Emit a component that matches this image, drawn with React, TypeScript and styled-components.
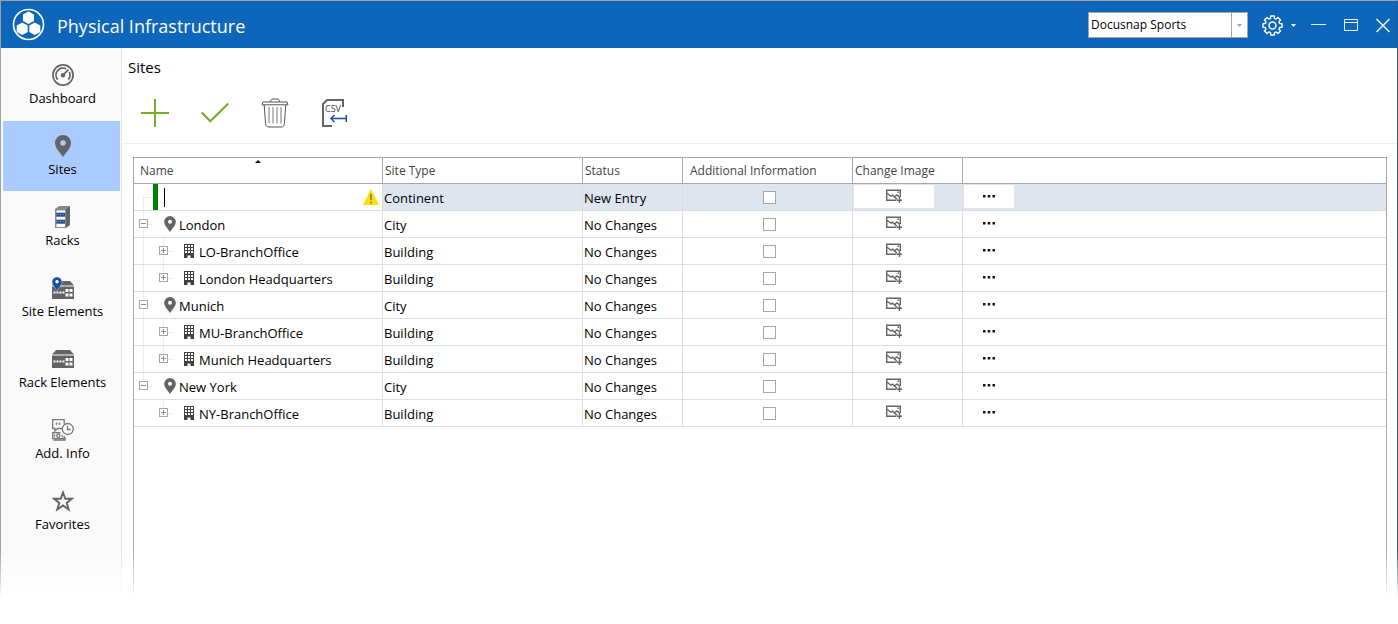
import React from "react";
import styled, { createGlobalStyle, css } from "styled-components";

const color = {
  brand: "#0e66ba",
  line: "#a6a6a6",
  rowLine: "#dedede",
  treeLine: "#ededed",
  selectedNav: "#a9cbff",
  selectedRow: "#dfe5ef",
  icon: "#646464",
  green: "#75af29",
  blue: "#1650a0",
};

const GlobalStyle = createGlobalStyle`
  *, *::before, *::after { box-sizing: border-box; }
  body {
    margin: 0;
    background: #fff;
    color: #000;
    font: 13px/20px "Open Sans", "Noto Sans", sans-serif;
  }
  button, input, select { font: inherit; color: inherit; }
  svg { display: block; }
`;

const Shell = styled.div`
  position: relative;
  display: flex;
  flex-direction: column;
  min-height: 100vh;
  border: 1px solid #a0a0a0;
  border-right-color: #2c5a90;
  border-bottom: 0;
`;

const TitleBar = styled.header`
  display: flex;
  align-items: center;
  height: 47px;
  padding: 0 6px 0 11px;
  background: ${color.brand};
  color: #fff;
`;

const AppTitle = styled.h1`
  flex: 1;
  margin: 0 0 0 12px;
  padding-top: 3px;
  font-size: 18px;
  line-height: 24px;
  font-weight: 400;
`;

const ComboBox = styled.div`
  display: grid;
  grid-template-columns: 1fr 16px;
  width: 160px;
  height: 26px;
  margin-top: 1px;
  border: 1px solid ${color.line};
  background: #fff;
`;

const ComboSelect = styled.select`
  grid-area: 1 / 1 / 2 / 3;
  appearance: none;
  width: 100%;
  padding: 0 16px 1px 2px;
  border: 0;
  border-radius: 0;
  background: transparent;
  color: #000;
  font-size: 12px;
  outline: 0;
`;

const ComboArrow = styled.span`
  grid-area: 1 / 2 / 2 / 3;
  display: grid;
  place-items: center;
  border-left: 1px solid ${color.line};
  pointer-events: none;
`;

const PlainButton = styled.button`
  display: flex;
  align-items: center;
  justify-content: center;
  padding: 0;
  border: 0;
  background: transparent;
`;

const SettingsButton = styled(PlainButton)`
  gap: 8px;
  margin: 1px 0 0 14px;
`;

const WindowButtons = styled.div`
  display: flex;
  gap: 16px;
  margin-left: 15px;
`;

const WindowButton = styled(PlainButton)`
  width: 16px;
  height: 24px;
`;

const Body = styled.div`
  flex: 1;
  display: flex;
`;

const Sidebar = styled.nav`
  display: flex;
  flex-direction: column;
  flex: none;
  gap: 1px;
  width: 121px;
  padding: 2px 1px 0 2px;
  border-right: 1px solid #e6e6e6;
  background: #fafafa;
`;

const NavItem = styled.a<{ $active?: boolean }>`
  display: flex;
  flex-direction: column;
  align-items: center;
  gap: 2px;
  height: 70px;
  padding: 14px 0 0 2px;
  background: ${(p) => (p.$active ? color.selectedNav : "transparent")};
  color: inherit;
  text-decoration: none;
  white-space: nowrap;
`;

const Content = styled.main`
  flex: 1;
  display: flex;
  flex-direction: column;
  min-width: 0;
`;

const PageTitle = styled.h2`
  margin: 0;
  padding: 7px 6px 0;
  font-size: 15px;
  line-height: 24px;
  font-weight: 400;
`;

const Toolbar = styled.div`
  display: flex;
  padding: 4px 3px 0;
  border-bottom: 1px solid #f0f0f0;
`;

const ToolButton = styled(PlainButton)`
  width: 60px;
  height: 60px;
`;

const GridPanel = styled.section`
  flex: 1;
  margin: 13px 10px 0 11px;
  border: 1px solid ${color.line};
  border-bottom: 0;
`;

const Table = styled.table`
  width: 100%;
  border-collapse: separate;
  border-spacing: 0;
  table-layout: fixed;
`;

const Col = styled.col<{ $width?: number }>`
  ${(p) => p.$width && css`width: ${p.$width}px;`}
`;

const HeadCell = styled.th<{ $pad?: number }>`
  position: relative;
  height: 26px;
  padding: 0 0 0 ${(p) => p.$pad ?? 2}px;
  border-right: 1px solid ${color.line};
  border-bottom: 1px solid ${color.line};
  color: #444;
  font-size: 12px;
  line-height: 20px;
  font-weight: 400;
  text-align: left;
  white-space: nowrap;
  &:last-child { border-right: 0; }
`;

const SortMark = styled.svg`
  position: absolute;
  top: 2px;
  left: 50%;
  transform: translateX(-50%);
`;

const Row = styled.tr<{ $editing?: boolean }>`
  background: ${(p) => (p.$editing ? color.selectedRow : "transparent")};
`;

const Cell = styled.td<{ $pad?: number }>`
  height: 27px;
  padding: 0 0 0 ${(p) => p.$pad ?? 1}px;
  border-right: 1px solid ${color.rowLine};
  border-bottom: 1px solid ${color.rowLine};
  white-space: nowrap;
  &:last-child { border-right: 0; }
`;

const TextLine = styled.span`
  display: block;
  padding-top: 2px;
`;

const NameLine = styled.div<{ $editing?: boolean }>`
  display: flex;
  align-items: center;
  height: 26px;
  background: ${(p) => (p.$editing ? "#fff" : "transparent")};
`;

const NodeIcon = styled.span`
  width: 16px;
  padding-left: 1px;
`;

const NewMark = styled.span`
  width: 5px;
  height: 26px;
  background: #008000;
`;

const Caret = styled.span`
  width: 1px;
  height: 19px;
  margin-left: 6px;
  background: #000;
`;

const NameInput = styled.input`
  flex: 1;
  min-width: 0;
  padding: 0;
  border: 0;
  outline: 0;
  background: transparent;
`;

const WarningMark = styled.span`
  margin-right: 3px;
`;

const CheckLine = styled.div`
  display: flex;
  justify-content: center;
`;

const CheckBox = styled.input`
  appearance: none;
  width: 13px;
  height: 13px;
  margin: 0;
  border: 1px solid ${color.line};
  background: #fff;
`;

const CellButton = styled(PlainButton)<{ $width: number; $editing?: boolean }>`
  width: ${(p) => p.$width}px;
  height: 23px;
  margin-bottom: 2px;
  background: ${(p) => (p.$editing ? "#fff" : "transparent")};
`;

const BottomFade = styled.div`
  position: absolute;
  right: -1px;
  bottom: 0;
  left: -1px;
  height: 74px;
  background: linear-gradient(rgba(255, 255, 255, 0), #fff 48px);
  pointer-events: none;
`;

const Logo = () => (
  <svg width="33" height="33" viewBox="0 0 33 33" aria-hidden="true">
    <circle cx="16.5" cy="16.5" r="15" fill="none" stroke="#fff" strokeWidth="1.6" />
    <g fill="#fff">
      <path d="M16.5 3.4 22 6.5v6.4l-5.5 3.2-5.5-3.2V6.5z" />
      <path d="M10.2 14.4l5.5 3.1v6.4l-5.5 3.2-5.5-3.2v-6.4z" />
      <path d="M22.8 14.4l5.5 3.1v6.4l-5.5 3.2-5.5-3.2v-6.4z" />
    </g>
  </svg>
);

const teeth = 8;
const gearPath = (() => {
  const points: string[] = [];
  const at = (radius: number, angle: number) =>
    `${(10.5 + radius * Math.sin(angle)).toFixed(2)} ${(10.5 - radius * Math.cos(angle)).toFixed(2)}`;
  for (let i = 0; i < teeth; i++) {
    const mid = (i * 2 * Math.PI) / teeth;
    points.push(at(7.4, mid - 0.27), at(9.7, mid - 0.19), at(9.7, mid + 0.19), at(7.4, mid + 0.27));
  }
  return `M${points.join("L")}Z`;
})();

const GearIcon = () => (
  <svg width="21" height="21" viewBox="0 0 21 21" fill="none" stroke="#fff" strokeWidth="1.4" strokeLinejoin="round" aria-hidden="true">
    <path d={gearPath} />
    <circle cx="10.5" cy="10.5" r="3.5" />
  </svg>
);

const DownArrow = ({ fill }: { fill: string }) => (
  <svg width="5" height="3" viewBox="0 0 5 3" aria-hidden="true">
    <path d="M0 0h5L2.5 3z" fill={fill} />
  </svg>
);

const DashboardIcon = () => (
  <svg width="22" height="22" viewBox="0 0 22 22" fill="none" stroke={color.icon} aria-hidden="true">
    <circle cx="11" cy="11" r="10.1" strokeWidth="1.7" />
    <path d="M5.7 15.6A7 7 0 0 1 14.2 4.8M17.3 8A7 7 0 0 1 16.3 15.6" strokeWidth="1.7" />
    <path d="M11 11.2 16.4 5.6" strokeWidth="1.8" />
    <circle cx="11" cy="11.2" r="2.2" fill={color.icon} stroke="none" />
  </svg>
);

const PinIcon = ({ width, height }: { width: number; height: number }) => (
  <svg width={width} height={height} viewBox="0 0 16 22" fill={color.icon} aria-hidden="true">
    <path fillRule="evenodd" d="M8 0a8 8 0 0 1 8 8c0 5-5 9.500-8 14C5 17.500 0 13 0 8a8 8 0 0 1 8-8zm0 5.200a2.700 2.700 0 1 0 0 5.400 2.700 2.700 0 0 0 0-5.400z" />
  </svg>
);

const RackIcon = () => (
  <svg width="22" height="22" viewBox="0 0 22 22" aria-hidden="true">
    <path d="M3 3l4-3h11l-3.500 3z" fill="#8a8a8a" />
    <path d="M14 3l4-3v19l-4 3z" fill={color.icon} />
    <path d="M3 3h11v19H3z" fill="#8a8a8a" />
    <path d="M4.500 4.500h8.500v2H4.500zM4.500 11h8.500v2.500H4.500zM4.500 18h8.500v3H4.500z" fill="#fff" />
    <path d="M4.500 7h8.500v3.200H4.500zM4.500 14h8.500v3.200H4.500z" fill={color.blue} />
    <path d="M5.500 8.600h7M5.500 15.600h7" stroke="#9fb9df" strokeDasharray="1 1.500" />
  </svg>
);

const SwitchShape = () => (
  <>
    <path d="M4 0h14l4 4.500H0z" fill={color.icon} />
    <path d="M0 5.500h22V18H0z" fill={color.icon} />
    <path d="M1.500 11.500h11" stroke="#fff" strokeWidth="2" strokeDasharray="2 1" />
    <path d="M13.500 8h3v3h-3zM17.500 8h3v3h-3zM13.500 12.500h3v3h-3zM17.500 12.500h3v3h-3z" fill="#fff" />
  </>
);

const SiteElementsIcon = () => (
  <svg width="22" height="22" viewBox="0 0 22 22" aria-hidden="true">
    <g transform="translate(0 4)"><SwitchShape /></g>
    <path d="M5 0a5 5 0 0 1 5 5c0 3.200-3 5.500-5 8.500C3 10.500 0 8.200 0 5a5 5 0 0 1 5-5z" fill={color.blue} stroke="#fafafa" strokeWidth=".4" />
    <circle cx="5" cy="4.800" r="1.700" fill="#fff" />
  </svg>
);

const RackElementsIcon = () => (
  <svg width="22" height="22" viewBox="0 0 22 22" aria-hidden="true">
    <g transform="translate(0 2)"><SwitchShape /></g>
  </svg>
);

const InfoIcon = () => (
  <svg width="22" height="22" viewBox="0 0 22 22" fill="none" stroke="#777" strokeWidth="1.300" aria-hidden="true">
    <path d="M10.500 9.500H5.500L3 12V9.500H.700V.700h11.500v4" />
    <path d="M4.500 3.500v2.200M7.500 3.500v2.200" strokeWidth="1.500" />
    <circle cx="15.800" cy="10" r="5.500" />
    <path d="M15.500 6.500v4h3.200" />
    <path d="M8.500 13.700H.700v5.800h11.500V17" />
    <path d="M1.500 21h11.700v-2.500" />
    <circle cx="6.300" cy="16.600" r="1.600" />
    <path d="M2.500 15.200v2.600M10.200 15.800v2" />
  </svg>
);

const StarIcon = () => (
  <svg width="22" height="22" viewBox="0 0 22 22" fill="none" stroke={color.icon} strokeWidth="1.900" aria-hidden="true">
    <path d="M11 2.500l2.300 6.300h6.600l-5.200 4.100 2 6.600-5.700-4-5.700 4 2-6.600-5.200-4.100h6.600z" />
  </svg>
);

const PlusIcon = () => (
  <svg width="28" height="28" viewBox="0 0 28 28" stroke={color.green} strokeWidth="2" aria-hidden="true">
    <path d="M14 0v28M0 14h28" />
  </svg>
);

const CheckIcon = () => (
  <svg width="28" height="28" viewBox="0 0 28 28" fill="none" stroke={color.green} strokeWidth="2.200" aria-hidden="true">
    <path d="M.800 13.500l8.500 8.700L27.300 4.500" />
  </svg>
);

const TrashIcon = () => (
  <svg width="28" height="30" viewBox="0 0 28 30" fill="none" stroke="#555" aria-hidden="true">
    <path d="M9.500 4c0-2 1-3 2.500-3h4c1.500 0 2.500 1 2.500 3" />
    <path d="M2 4h24l1 2.800H1zM3.200 7l1.400 18.500c.2 2.500 1.400 3.500 3.400 3.500h12c2 0 3.200-1 3.400-3.500L24.800 7" />
    <path d="M8 9v16.500M12 9v16.500M16 9v16.500M20 9v16.500" stroke="#bbb" strokeWidth="2" />
  </svg>
);

const CsvText = styled.text`
  font: 9px "Open Sans", sans-serif;
`;

const CsvIcon = () => (
  <svg width="28" height="28" viewBox="0 0 28 28" fill="none" aria-hidden="true">
    <path d="M11 27H2V5l4-4h16v7" stroke={color.icon} strokeWidth="2" />
    <CsvText x="4" y="13" fill="#444">CSV</CsvText>
    <path d="M10 19.500H24.500M13.500 16L10 19.500l3.500 3.500M25.300 16v7" stroke={color.blue} strokeWidth="1.500" />
  </svg>
);

const BuildingIcon = () => (
  <svg width="10" height="14" viewBox="0 0 10 14" aria-hidden="true">
    <path d="M0 0h10v14H6.500v-2.500h-3V14H0z" fill="#404040" />
    <path d="M1 1h2v2H1zM4 1h2v2H4zM7 1h2v2H7zM1 4h2v2H1zM4 4h2v2H4zM7 4h2v2H7zM1 7h2v2H1zM4 7h2v2H4zM7 7h2v2H7z" fill="#fff" />
  </svg>
);

const WarningIcon = () => (
  <svg width="16" height="16" viewBox="0 0 16 16" role="img" aria-label="Name required">
    <path d="M8 0l8 16H0z" fill="#ffdf00" />
    <path d="M8 5v6M8 12.500v2" stroke="#777" strokeWidth="1.600" />
  </svg>
);

const ImageIcon = () => (
  <svg width="16" height="14" viewBox="0 0 16 14" fill="none" stroke={color.icon} strokeWidth="1.400" aria-hidden="true">
    <path d="M10.500 11.300H.700V1.200h13.600V8" />
    <path d="M1 4.200l4 3 1.500-1 4.500 4M9 7.500l2-1.500 3 2.500" />
    <path d="M13.500 8.500V14M11 11.200h5M11.500 3.200h1.500" />
  </svg>
);

const DotsIcon = () => (
  <svg width="12" height="3" viewBox="0 0 12 3" aria-hidden="true">
    <path d="M0 0h2.500v2.500H0zM4.700 0h2.500v2.500H4.700zM9.500 0H12v2.500H9.500z" fill="#111" />
  </svg>
);

type Branch = { level: 0 | 1; up: boolean; down: boolean; trunk?: boolean; open?: boolean };

const TreeLines = ({ level, up, down, trunk, open, isNew }: Branch & { isNew?: boolean }) => {
  const x = 9.5 + level * 20;
  const width = isNew ? 19 : 29 + level * 20;
  return (
    <svg width={width} height="26" viewBox={`0 0 ${width} 26`} fill="none" stroke={color.treeLine} aria-hidden="true">
      {trunk && <path d="M9.500 0v26" />}
      <path d={`M${x} ${up ? 0 : 13}V${down ? 26 : 13}M${x} 13.500h10`} />
      {!isNew && (
        <>
          <rect x={x - 4} y="8.500" width="8" height="8" fill="#fff" stroke="#a6a6a6" />
          <path d={`M${x - 2.5} 12.500h5${open ? "" : `M${x} 10v5`}`} stroke="#8c8c8c" />
        </>
      )}
    </svg>
  );
};

type Site = Branch & { name: string; type: string };

const sites: Site[] = [
  { name: "London", type: "City", level: 0, up: true, down: true, open: true },
  { name: "LO-BranchOffice", type: "Building", level: 1, up: true, down: true, trunk: true },
  { name: "London Headquarters", type: "Building", level: 1, up: true, down: false, trunk: true },
  { name: "Munich", type: "City", level: 0, up: true, down: true, open: true },
  { name: "MU-BranchOffice", type: "Building", level: 1, up: true, down: true, trunk: true },
  { name: "Munich Headquarters", type: "Building", level: 1, up: true, down: false, trunk: true },
  { name: "New York", type: "City", level: 0, up: true, down: false, open: true },
  { name: "NY-BranchOffice", type: "Building", level: 1, up: true, down: false },
];

const navItems = [
  { label: "Dashboard", icon: <DashboardIcon /> },
  { label: "Sites", icon: <PinIcon width={16} height={22} />, active: true },
  { label: "Racks", icon: <RackIcon /> },
  { label: "Site Elements", icon: <SiteElementsIcon /> },
  { label: "Rack Elements", icon: <RackElementsIcon /> },
  { label: "Add. Info", icon: <InfoIcon /> },
  { label: "Favorites", icon: <StarIcon /> },
];

const RowActions = ({ name, editing }: { name: string; editing?: boolean }) => (
  <>
    <Cell $pad={4}>
      <CheckLine>
        <CheckBox type="checkbox" aria-label={`Additional information for ${name}`} />
      </CheckLine>
    </Cell>
    <Cell>
      <CellButton type="button" $width={80} $editing={editing} aria-label={`Change image of ${name}`}>
        <ImageIcon />
      </CellButton>
    </Cell>
    <Cell>
      <CellButton type="button" $width={50} $editing={editing} aria-label={`More for ${name}`}>
        <DotsIcon />
      </CellButton>
    </Cell>
  </>
);

export default function App() {
  return (
    <Shell>
      <GlobalStyle />
      <TitleBar>
        <Logo />
        <AppTitle>Physical Infrastructure</AppTitle>
        <ComboBox>
          <ComboSelect aria-label="Company" defaultValue="Docusnap Sports">
            <option>Docusnap Sports</option>
          </ComboSelect>
          <ComboArrow><DownArrow fill="#a0a0a0" /></ComboArrow>
        </ComboBox>
        <SettingsButton type="button" aria-label="Settings">
          <GearIcon />
          <DownArrow fill="#fff" />
        </SettingsButton>
        <WindowButtons>
          <WindowButton type="button" aria-label="Minimize">
            <svg width="16" height="16" viewBox="0 0 16 16" stroke="#e8f0f8"><path d="M0 7.500h15" /></svg>
          </WindowButton>
          <WindowButton type="button" aria-label="Maximize">
            <svg width="16" height="16" viewBox="0 0 16 16" fill="none" stroke="#e8f0f8">
              <path d="M1.500 2.500h13v11h-13zM1.500 5.500h13" />
            </svg>
          </WindowButton>
          <WindowButton type="button" aria-label="Close">
            <svg width="16" height="16" viewBox="0 0 16 16" stroke="#e8f0f8" strokeWidth="1.500"><path d="M1.500 2l13 13M14.500 2l-13 13" /></svg>
          </WindowButton>
        </WindowButtons>
      </TitleBar>
      <Body>
        <Sidebar aria-label="Sections">
          {navItems.map((item) => (
            <NavItem key={item.label} href="#" $active={item.active}>
              {item.icon}
              <span>{item.label}</span>
            </NavItem>
          ))}
        </Sidebar>
        <Content>
          <PageTitle>Sites</PageTitle>
          <Toolbar role="toolbar" aria-label="Site actions">
            <ToolButton type="button" aria-label="Add"><PlusIcon /></ToolButton>
            <ToolButton type="button" aria-label="Save"><CheckIcon /></ToolButton>
            <ToolButton type="button" aria-label="Delete"><TrashIcon /></ToolButton>
            <ToolButton type="button" aria-label="Import CSV"><CsvIcon /></ToolButton>
          </Toolbar>
          <GridPanel>
            <Table>
              <colgroup>
                <Col $width={249} />
                <Col $width={200} />
                <Col $width={100} />
                <Col $width={170} />
                <Col $width={110} />
                <Col />
              </colgroup>
              <thead>
                <tr>
                  <HeadCell $pad={6}>
                    Name
                    <SortMark width="6" height="3" viewBox="0 0 6 3" aria-hidden="true"><path d="M3 0l3 3H0z" /></SortMark>
                  </HeadCell>
                  <HeadCell>Site Type</HeadCell>
                  <HeadCell>Status</HeadCell>
                  <HeadCell $pad={7}>Additional Information</HeadCell>
                  <HeadCell>Change Image</HeadCell>
                  <HeadCell aria-label="More" />
                </tr>
              </thead>
              <tbody>
                <Row $editing>
                  <Cell $pad={0}>
                    <NameLine $editing>
                      <TreeLines level={0} up={false} down isNew />
                      <NewMark />
                      <Caret />
                      <NameInput type="text" aria-label="Name" />
                      <WarningMark><WarningIcon /></WarningMark>
                    </NameLine>
                  </Cell>
                  <Cell><TextLine>Continent</TextLine></Cell>
                  <Cell><TextLine>New Entry</TextLine></Cell>
                  <RowActions name="new entry" editing />
                </Row>
                {sites.map((site) => (
                  <Row key={site.name}>
                    <Cell $pad={0}>
                      <NameLine>
                        <TreeLines level={site.level} up={site.up} down={site.down} trunk={site.trunk} open={site.open} />
                        <NodeIcon>{site.level === 0 ? <PinIcon width={12} height={16} /> : <BuildingIcon />}</NodeIcon>
                        <TextLine>{site.name}</TextLine>
                      </NameLine>
                    </Cell>
                    <Cell><TextLine>{site.type}</TextLine></Cell>
                    <Cell><TextLine>No Changes</TextLine></Cell>
                    <RowActions name={site.name} />
                  </Row>
                ))}
              </tbody>
            </Table>
          </GridPanel>
        </Content>
      </Body>
      <BottomFade />
    </Shell>
  );
}
